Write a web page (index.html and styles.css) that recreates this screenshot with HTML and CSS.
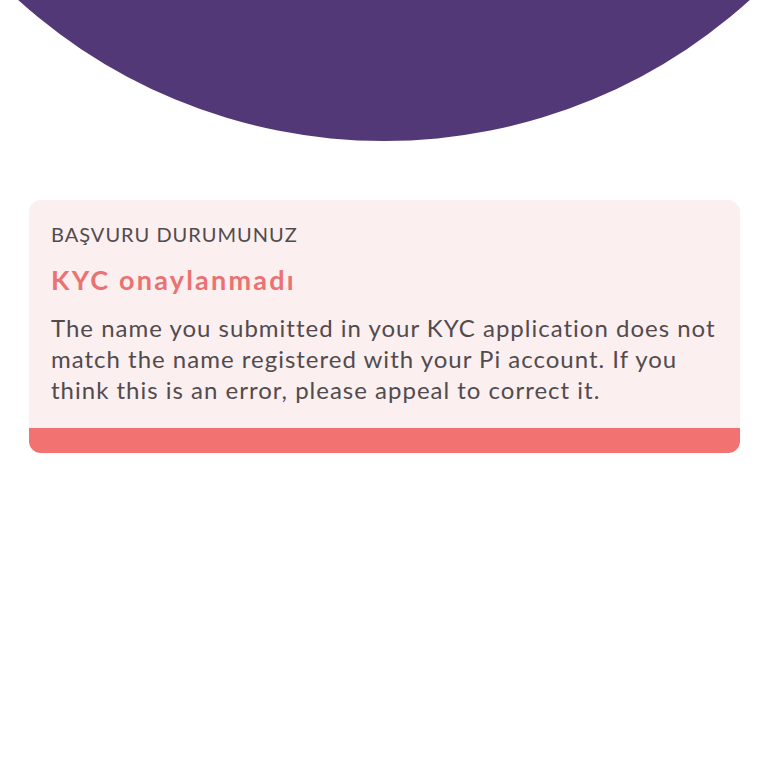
FILE: index.html
```html
<!DOCTYPE html>
<html lang="tr">
<head>
  <meta charset="UTF-8">
  <meta name="viewport" content="width=device-width, initial-scale=1.0">
  <link rel="stylesheet" href="styles.css">
  <title>KYC</title>
</head>
<body>
  <div class="header">
    <div class="blob"></div>
  </div>
  <div class="status-card">
    <div class="status-body">
      <div class="status-label">BAŞVURU DURUMUNUZ</div>
      <div class="status-title">KYC onaylanmadı</div>
      <p class="status-text">The name you submitted in your KYC application does not match the name registered with your Pi account. If you think this is an error, please appeal to correct it.</p>
    </div>
    <div class="status-bar"></div>
  </div>
</body>
</html>
```

FILE: styles.css
```css
body {
  margin: 0;
  background: #ffffff;
  font-family: Lato, "Open Sans", sans-serif;
  color: #4f4a4d;
  overflow: hidden;
}

.header {
  height: 200px;
  position: relative;
  overflow: hidden;
}

.blob {
  position: absolute;
  left: -161px;
  top: -949px;
  width: 1090px;
  height: 1090px;
  border-radius: 50%;
  background-color: #533877;
}

.status-card {
  margin: 0 28px 0 29px;
  background-color: #fcefef;
  border-radius: 12px;
  overflow: hidden;
}

.status-body {
  padding: 21px 18px 23px 22px;
}

.status-label {
  font-size: 20px;
  line-height: 26px;
  letter-spacing: 1px;
  color: #514b4e;
}

.status-title {
  margin-top: 17px;
  font-size: 27px;
  line-height: 32px;
  font-weight: 700;
  letter-spacing: 2.2px;
  color: #ea7272;
}

.status-text {
  margin: 16px 0 0 0;
  font-size: 24px;
  line-height: 31px;
  letter-spacing: 1px;
  color: #514b4e;
}

.status-bar {
  height: 25px;
  background-color: #f17270;
}
```
